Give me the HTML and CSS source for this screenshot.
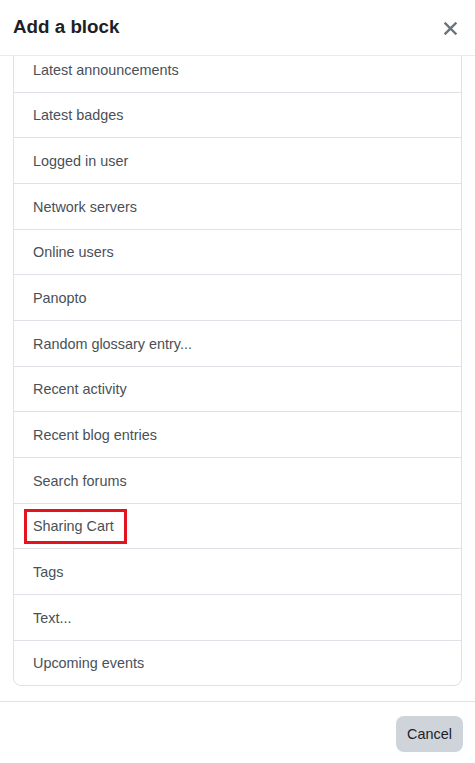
FILE: index.html
```html
<!DOCTYPE html>
<html lang="en">
<head>
<meta charset="utf-8">
<title>Add a block</title>
<link rel="stylesheet" href="styles.css">
</head>
<body>
<div class="modal">
  <header class="modal-header">
    <h5 class="modal-title">Add a block</h5>
    <button class="close" aria-label="Close">
      <svg width="13" height="13" viewBox="0 0 13 13"><path d="M1.5 1.5 L11.5 11.5 M11.5 1.5 L1.5 11.5" stroke="#6a737b" stroke-width="2.4" stroke-linecap="square"/></svg>
    </button>
  </header>
  <div class="modal-body">
    <div class="list-group">
      <a class="list-item">Latest announcements</a>
      <a class="list-item">Latest badges</a>
      <a class="list-item">Logged in user</a>
      <a class="list-item">Network servers</a>
      <a class="list-item">Online users</a>
      <a class="list-item">Panopto</a>
      <a class="list-item">Random glossary entry...</a>
      <a class="list-item">Recent activity</a>
      <a class="list-item">Recent blog entries</a>
      <a class="list-item">Search forums</a>
      <a class="list-item"><span class="highlight">Sharing Cart</span></a>
      <a class="list-item">Tags</a>
      <a class="list-item">Text...</a>
      <a class="list-item">Upcoming events</a>
    </div>
  </div>
  <footer class="modal-footer">
    <button class="btn-cancel">Cancel</button>
  </footer>
</div>
</body>
</html>
```
FILE: styles.css
```css
* { box-sizing: border-box; }
html, body { margin: 0; padding: 0; background: #fff; }
body {
  font-family: "Liberation Sans", Arial, sans-serif;
  color: #1d2125;
  width: 475px;
  height: 763px;
  overflow: hidden;
}
.modal {
  display: flex;
  flex-direction: column;
  height: 763px;
}
.modal-header {
  height: 56px;
  flex: none;
  display: flex;
  align-items: center;
  justify-content: space-between;
  padding: 0 18px 1px 13px;
  border-bottom: 1px solid #e9ecef;
  background: #fff;
  position: relative;
  z-index: 1;
}
.modal-title {
  margin: 0;
  font-size: 18.8px;
  font-weight: 700;
  color: #1d2125;
}
.close {
  border: 0;
  background: none;
  padding: 0;
  display: flex;
  margin-top: 2px;
}
.modal-body {
  flex: 1;
  overflow: hidden;
  padding: 0 13px 16px 13px;
}
.list-group {
  margin-top: -10px;
  border: 1px solid #dee2e6;
  border-radius: 8px;
  display: flex;
  flex-direction: column;
}
.list-item {
  display: flex;
  align-items: center;
  padding: 1px 19px 0;
  height: 45.67px;
  font-size: 14.4px;
  color: #495057;
  border-top: 1px solid #dee2e6;
}
.list-item:first-child { border-top: 0; height: 44.67px; }
.highlight {
  position: relative;
  display: inline-block;
}
.highlight::after {
  content: "";
  position: absolute;
  left: -9px;
  right: -13px;
  top: -9px;
  bottom: -10px;
  border: 3px solid #e3131f;
}
.modal-footer {
  flex: none;
  height: 62px;
  border-top: 1px solid #dee2e6;
  display: flex;
  align-items: center;
  justify-content: flex-end;
  padding: 0 12px 0 12px;
}
.btn-cancel {
  font-family: inherit;
  font-size: 14.4px;
  color: #1d2125;
  background: #ced4da;
  border: 0;
  border-radius: 8px;
  height: 36px;
  width: 67px;
  padding: 0;
  margin-top: 2px;
}
```
